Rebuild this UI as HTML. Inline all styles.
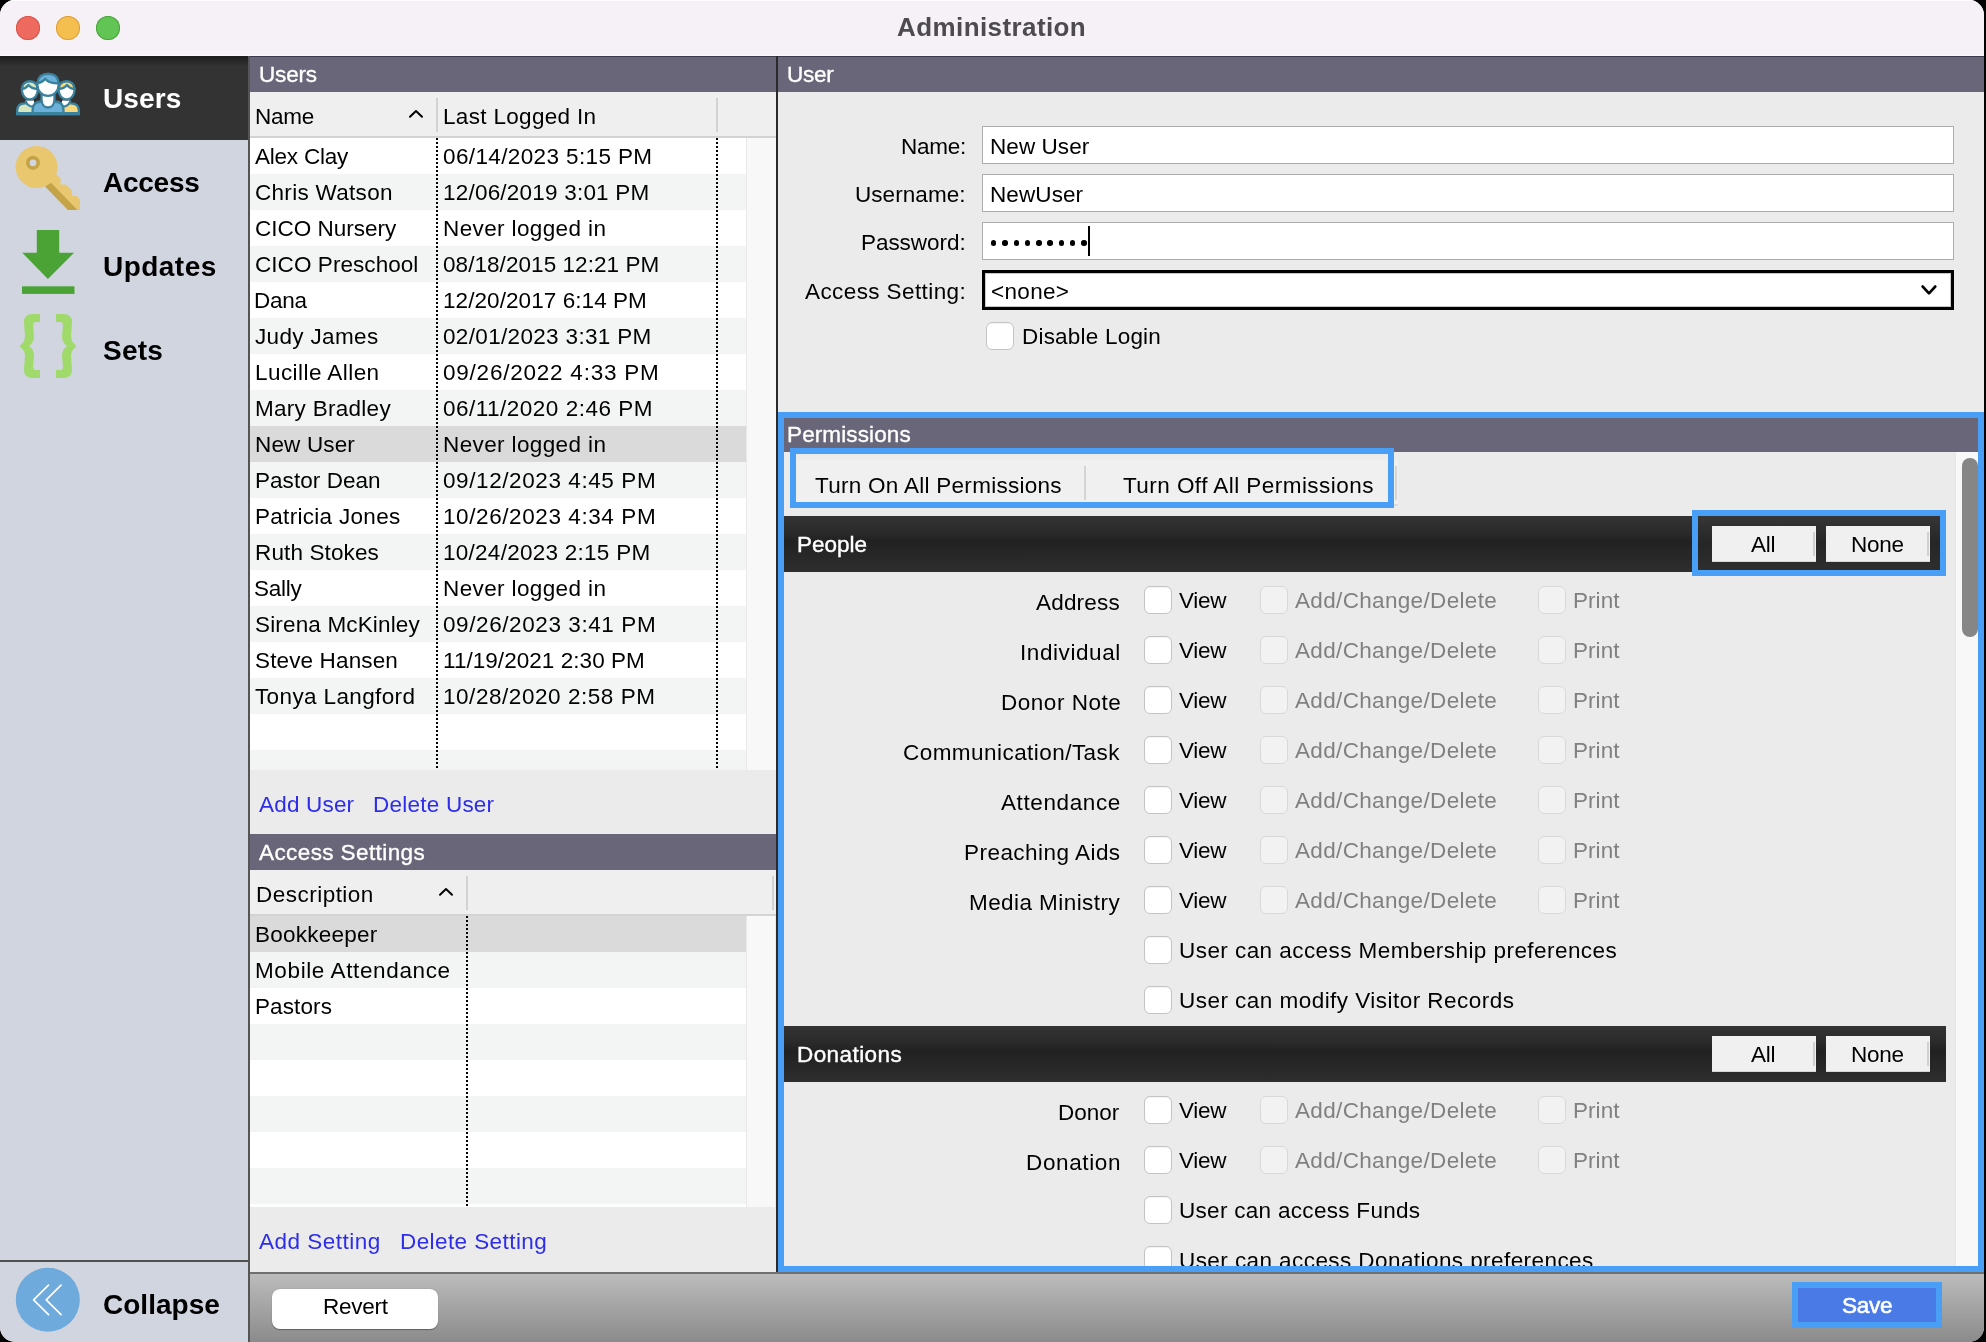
<!DOCTYPE html>
<html><head><meta charset="utf-8"><title>Administration</title>
<style>
html,body{margin:0;padding:0;}
body{width:1986px;height:1342px;background:#000;position:relative;overflow:hidden;font-family:"Liberation Sans",sans-serif;}
#win{position:absolute;left:0;top:0;width:1984px;height:1342px;border-radius:15px;overflow:hidden;background:#ebebeb;}
#win div{position:absolute;}
.t{white-space:nowrap;will-change:transform;}
</style></head><body><div id="win">
<div style="left:0px;top:0px;width:1984px;height:56px;background:#f6f1f7;border-top:1px solid #fdfbfd;box-sizing:border-box;"></div>
<div style="left:0px;top:55px;width:1984px;height:1px;background:#fbf9fb;"></div>
<div style="left:16px;top:16px;width:24px;height:24px;background:#ee6a5f;border-radius:50%;box-shadow:inset 0 0 0 1px #d9534a;"></div>
<div style="left:56px;top:16px;width:24px;height:24px;background:#f5bf4f;border-radius:50%;box-shadow:inset 0 0 0 1px #dca03a;"></div>
<div style="left:96px;top:16px;width:24px;height:24px;background:#61c454;border-radius:50%;box-shadow:inset 0 0 0 1px #4aa63c;"></div>
<div class="t" style="left:897.20px;top:14.09px;font-size:26px;line-height:26px;font-weight:700;color:#4d4b50;letter-spacing:0.408px;">Administration</div>
<div style="left:0px;top:56px;width:248px;height:1286px;background:#d0d5df;"></div>
<div style="left:0px;top:56px;width:248px;height:84px;background:linear-gradient(#1c1c1c 0px,#333 10px,#333 100%);"></div>
<div style="left:248px;top:56px;width:2px;height:1286px;background:#555;"></div>
<svg style="position:absolute;left:14px;top:70px" width="70" height="50" viewBox="14 70 70 50">
<g stroke="#3a819e" stroke-width="2.3" stroke-linejoin="round">
<path d="M17.2 114 V110.5 Q17.2 103.3 25 103.3 H34 V114 Z" fill="#d5e7c1"/>
<path d="M25.5 100.5 Q27.5 107 34 106.5 V100.5 Z" fill="#fff" stroke="none"/><path d="M25.5 100.5 Q27.5 107 34 106.5" fill="none"/>
<path d="M78.8 114 V110.5 Q78.8 103.3 71 103.3 H62 V114 Z" fill="#f8da7c"/>
<path d="M70.5 100.5 Q68.5 107 62 106.5 V100.5 Z" fill="#fff" stroke="none"/><path d="M70.5 100.5 Q68.5 107 62 106.5" fill="none"/>
<ellipse cx="29.8" cy="90.3" rx="7.9" ry="9" fill="#fff"/>
<path d="M21.9 89 Q26 88.5 28.5 85 Q31.5 88.8 37.7 89 Q37.2 81.3 29.8 81.3 Q22.4 81.3 21.9 89 Z" fill="#d5e7c1"/>
<ellipse cx="66.6" cy="90.3" rx="7.9" ry="9" fill="#fff"/>
<path d="M58.7 89 Q64 88.8 67 85 Q69.5 88.5 74.5 89 Q74 81.3 66.6 81.3 Q59.2 81.3 58.7 89 Z" fill="#f8da7c"/>
<path d="M32.6 114 V110 Q32.6 101.5 42 101.5 H54 Q63.5 101.5 63.5 110 V114 Z" fill="#6ab0d8"/>
<path d="M41.5 94 V99.5 Q42 107.5 48 107.5 Q54 107.5 54.5 99.5 V94 Z" fill="#fff" stroke="none"/><path d="M41.5 94 V99.5 Q42 107.5 48 107.5 Q54 107.5 54.5 99.5 V94" fill="none"/>
<ellipse cx="48" cy="84.9" rx="10.6" ry="11" fill="#fff"/>
<path d="M37.5 83 Q42.5 82.5 45.3 78.8 Q48.5 83.3 58.5 83.3 Q58.1 73.9 48 73.9 Q38.4 73.9 37.5 83 Z" fill="#6ab0d8"/>
</g>
<rect x="16" y="112" width="64" height="3.2" fill="#3a819e"/>
</svg>
<svg style="position:absolute;left:10px;top:140px" width="80" height="80" viewBox="10 140 80 80">
<path d="M45 186 L68 210 L80 210 L80 199.5 L76.5 196 L72 196 L72 190.5 L66 184.5 L60.5 184.5 L60.5 178.5 L56 174 z" fill="#e8c76e"/>
<path d="M45 186.5 L68 210 L77.5 210 L51 182.8 z" fill="#c5a448"/>
<circle cx="36.5" cy="167" r="21" fill="#e8c76e"/>
<circle cx="33" cy="162.8" r="5.2" fill="#d0d5df" stroke="#c5a448" stroke-width="3.6"/>
</svg>
<svg style="position:absolute;left:10px;top:224px" width="80" height="80" viewBox="10 224 80 80">
<path d="M36.8 230 H59.2 V252.7 H74.1 L47.9 279 L22.2 252.7 H36.8 z" fill="#4ba235"/>
<rect x="22" y="286.3" width="52.5" height="7.6" fill="#4ba235"/>
</svg>
<svg style="position:absolute;left:10px;top:308px" width="80" height="80" viewBox="10 308 80 80">
<path d="M40 314 H33 Q24 314 24 322 Q24.5 330 25 336 Q25 342 20 345.5 V347 Q25 350 25 356 Q24.5 362 24 370 Q24 378 33 378 H40 V370 H36 Q33 370 33 367 Q33.5 361 34 356 Q34 349.5 29 346 Q34 342.5 34 336 Q33.5 331 33 325 Q33 322 36 322 H40 z" fill="#a0da6b"/>
<path d="M56 314 H63 Q72 314 72 322 Q71.5 330 71 336 Q71 342 76 345.5 V347 Q71 350 71 356 Q71.5 362 72 370 Q72 378 63 378 H56 V370 H60 Q63 370 63 367 Q62.5 361 62 356 Q62 349.5 67 346 Q62 342.5 62 336 Q62.5 331 63 325 Q63 322 60 322 H56 z" fill="#a0da6b"/>
</svg>
<div class="t" style="left:103.20px;top:85.20px;font-size:28px;line-height:28px;font-weight:700;color:#fff;letter-spacing:0.125px;">Users</div>
<div class="t" style="left:103.12px;top:169.20px;font-size:28px;line-height:28px;font-weight:700;color:#000;letter-spacing:-0.250px;">Access</div>
<div class="t" style="left:103.20px;top:253.20px;font-size:28px;line-height:28px;font-weight:700;color:#000;letter-spacing:0.467px;">Updates</div>
<div class="t" style="left:103.20px;top:337.20px;font-size:28px;line-height:28px;font-weight:700;color:#000;letter-spacing:0.200px;">Sets</div>
<div style="left:0px;top:1260px;width:248px;height:2px;background:#505050;"></div>
<svg style="position:absolute;left:14px;top:1266px" width="68" height="68" viewBox="14 1266 68 68">
<circle cx="47.8" cy="1299.7" r="32" fill="#6eaadc"/>
<path d="M48.5 1285.2 L33.6 1299.8 L48.5 1314.6 M61.1 1285.2 L46.2 1299.8 L61.1 1314.6" fill="none" stroke="#fff" stroke-width="1.7" stroke-linecap="round" stroke-linejoin="round"/>
</svg>
<div class="t" style="left:103.20px;top:1291.20px;font-size:28px;line-height:28px;font-weight:700;color:#000;letter-spacing:0.014px;">Collapse</div>
<div style="left:250px;top:56px;width:526px;height:1216px;background:#ebebeb;"></div>
<div style="left:250px;top:56px;width:526px;height:36px;background:#686678;"></div>
<div class="t" style="left:259.30px;top:63.85px;font-size:22.5px;line-height:22.5px;font-weight:400;color:#fff;letter-spacing:-0.175px;-webkit-text-stroke:0.35px #fff;">Users</div>
<div style="left:250px;top:56px;width:526px;height:1px;background:#3c3b4c;"></div>
<div style="left:250px;top:92px;width:526px;height:44px;background:#efefef;"></div>
<div style="left:250px;top:136px;width:526px;height:2px;background:#d3d3d3;"></div>
<div style="left:436px;top:98px;width:2px;height:34px;background:#d2d2d2;"></div>
<div style="left:716px;top:98px;width:2px;height:34px;background:#d2d2d2;"></div>
<div class="t" style="left:254.92px;top:105.65px;font-size:22.5px;line-height:22.5px;font-weight:400;color:#000;letter-spacing:-0.250px;">Name</div>
<div class="t" style="left:442.80px;top:105.65px;font-size:22.5px;line-height:22.5px;font-weight:400;color:#000;letter-spacing:0.323px;">Last Logged In</div>
<svg style="position:absolute;left:408px;top:107px" width="16" height="12" viewBox="0 0 16 12"><path d="M2 9.7 L8 4.1 L14 9.7" fill="none" stroke="#000" stroke-width="2" stroke-linecap="round" stroke-linejoin="round"/></svg>
<div style="left:250px;top:138px;width:496px;height:36px;background:#ffffff;"></div>
<div style="left:250px;top:174px;width:496px;height:36px;background:#f3f5f4;"></div>
<div style="left:250px;top:210px;width:496px;height:36px;background:#ffffff;"></div>
<div style="left:250px;top:246px;width:496px;height:36px;background:#f3f5f4;"></div>
<div style="left:250px;top:282px;width:496px;height:36px;background:#ffffff;"></div>
<div style="left:250px;top:318px;width:496px;height:36px;background:#f3f5f4;"></div>
<div style="left:250px;top:354px;width:496px;height:36px;background:#ffffff;"></div>
<div style="left:250px;top:390px;width:496px;height:36px;background:#f3f5f4;"></div>
<div style="left:250px;top:426px;width:496px;height:36px;background:#dadada;"></div>
<div style="left:250px;top:462px;width:496px;height:36px;background:#f3f5f4;"></div>
<div style="left:250px;top:498px;width:496px;height:36px;background:#ffffff;"></div>
<div style="left:250px;top:534px;width:496px;height:36px;background:#f3f5f4;"></div>
<div style="left:250px;top:570px;width:496px;height:36px;background:#ffffff;"></div>
<div style="left:250px;top:606px;width:496px;height:36px;background:#f3f5f4;"></div>
<div style="left:250px;top:642px;width:496px;height:36px;background:#ffffff;"></div>
<div style="left:250px;top:678px;width:496px;height:36px;background:#f3f5f4;"></div>
<div style="left:250px;top:714px;width:496px;height:36px;background:#ffffff;"></div>
<div style="left:250px;top:750px;width:496px;height:20px;background:#f3f5f4;"></div>
<div class="t" style="left:254.70px;top:145.55px;font-size:22.5px;line-height:22.5px;font-weight:400;color:#000;letter-spacing:-0.225px;">Alex Clay</div>
<div class="t" style="left:442.90px;top:145.55px;font-size:22.5px;line-height:22.5px;font-weight:400;color:#000;letter-spacing:0.376px;">06/14/2023 5:15 PM</div>
<div class="t" style="left:254.70px;top:181.55px;font-size:22.5px;line-height:22.5px;font-weight:400;color:#000;letter-spacing:0.300px;">Chris Watson</div>
<div class="t" style="left:442.90px;top:181.55px;font-size:22.5px;line-height:22.5px;font-weight:400;color:#000;letter-spacing:0.212px;">12/06/2019 3:01 PM</div>
<div class="t" style="left:254.70px;top:217.55px;font-size:22.5px;line-height:22.5px;font-weight:400;color:#000;letter-spacing:0.000px;">CICO Nursery</div>
<div class="t" style="left:442.90px;top:217.55px;font-size:22.5px;line-height:22.5px;font-weight:400;color:#000;letter-spacing:0.379px;">Never logged in</div>
<div class="t" style="left:254.70px;top:253.55px;font-size:22.5px;line-height:22.5px;font-weight:400;color:#000;letter-spacing:0.062px;">CICO Preschool</div>
<div class="t" style="left:442.90px;top:253.55px;font-size:22.5px;line-height:22.5px;font-weight:400;color:#000;letter-spacing:0.061px;">08/18/2015 12:21 PM</div>
<div class="t" style="left:253.88px;top:289.55px;font-size:22.5px;line-height:22.5px;font-weight:400;color:#000;letter-spacing:-0.250px;">Dana</div>
<div class="t" style="left:442.90px;top:289.55px;font-size:22.5px;line-height:22.5px;font-weight:400;color:#000;letter-spacing:0.071px;">12/20/2017 6:14 PM</div>
<div class="t" style="left:254.70px;top:325.55px;font-size:22.5px;line-height:22.5px;font-weight:400;color:#000;letter-spacing:0.344px;">Judy James</div>
<div class="t" style="left:442.90px;top:325.55px;font-size:22.5px;line-height:22.5px;font-weight:400;color:#000;letter-spacing:0.335px;">02/01/2023 3:31 PM</div>
<div class="t" style="left:254.70px;top:361.55px;font-size:22.5px;line-height:22.5px;font-weight:400;color:#000;letter-spacing:0.442px;">Lucille Allen</div>
<div class="t" style="left:442.90px;top:361.55px;font-size:22.5px;line-height:22.5px;font-weight:400;color:#000;letter-spacing:0.771px;">09/26/2022 4:33 PM</div>
<div class="t" style="left:254.70px;top:397.55px;font-size:22.5px;line-height:22.5px;font-weight:400;color:#000;letter-spacing:0.282px;">Mary Bradley</div>
<div class="t" style="left:442.90px;top:397.55px;font-size:22.5px;line-height:22.5px;font-weight:400;color:#000;letter-spacing:0.494px;">06/11/2020 2:46 PM</div>
<div class="t" style="left:254.70px;top:433.55px;font-size:22.5px;line-height:22.5px;font-weight:400;color:#000;letter-spacing:0.157px;">New User</div>
<div class="t" style="left:442.90px;top:433.55px;font-size:22.5px;line-height:22.5px;font-weight:400;color:#000;letter-spacing:0.379px;">Never logged in</div>
<div class="t" style="left:254.70px;top:469.55px;font-size:22.5px;line-height:22.5px;font-weight:400;color:#000;letter-spacing:0.050px;">Pastor Dean</div>
<div class="t" style="left:442.90px;top:469.55px;font-size:22.5px;line-height:22.5px;font-weight:400;color:#000;letter-spacing:0.588px;">09/12/2023 4:45 PM</div>
<div class="t" style="left:254.70px;top:505.55px;font-size:22.5px;line-height:22.5px;font-weight:400;color:#000;letter-spacing:0.300px;">Patricia Jones</div>
<div class="t" style="left:442.90px;top:505.55px;font-size:22.5px;line-height:22.5px;font-weight:400;color:#000;letter-spacing:0.588px;">10/26/2023 4:34 PM</div>
<div class="t" style="left:254.70px;top:541.55px;font-size:22.5px;line-height:22.5px;font-weight:400;color:#000;letter-spacing:0.130px;">Ruth Stokes</div>
<div class="t" style="left:442.90px;top:541.55px;font-size:22.5px;line-height:22.5px;font-weight:400;color:#000;letter-spacing:0.265px;">10/24/2023 2:15 PM</div>
<div class="t" style="left:254.10px;top:577.55px;font-size:22.5px;line-height:22.5px;font-weight:400;color:#000;letter-spacing:-0.250px;">Sally</div>
<div class="t" style="left:442.90px;top:577.55px;font-size:22.5px;line-height:22.5px;font-weight:400;color:#000;letter-spacing:0.379px;">Never logged in</div>
<div class="t" style="left:254.70px;top:613.55px;font-size:22.5px;line-height:22.5px;font-weight:400;color:#000;letter-spacing:0.157px;">Sirena McKinley</div>
<div class="t" style="left:442.90px;top:613.55px;font-size:22.5px;line-height:22.5px;font-weight:400;color:#000;letter-spacing:0.588px;">09/26/2023 3:41 PM</div>
<div class="t" style="left:254.70px;top:649.55px;font-size:22.5px;line-height:22.5px;font-weight:400;color:#000;letter-spacing:0.136px;">Steve Hansen</div>
<div class="t" style="left:442.90px;top:649.55px;font-size:22.5px;line-height:22.5px;font-weight:400;color:#000;letter-spacing:0.047px;">11/19/2021 2:30 PM</div>
<div class="t" style="left:254.70px;top:685.55px;font-size:22.5px;line-height:22.5px;font-weight:400;color:#000;letter-spacing:0.369px;">Tonya Langford</div>
<div class="t" style="left:442.90px;top:685.55px;font-size:22.5px;line-height:22.5px;font-weight:400;color:#000;letter-spacing:0.547px;">10/28/2020 2:58 PM</div>
<div style="left:436px;top:138px;width:2px;height:632px;background:repeating-linear-gradient(#000 0 2px,transparent 2px 4px);"></div>
<div style="left:716px;top:138px;width:2px;height:632px;background:repeating-linear-gradient(#000 0 2px,transparent 2px 4px);"></div>
<div style="left:746px;top:138px;width:30px;height:632px;background:#f8f8f8;border-left:1px solid #e8e8e8;box-sizing:border-box;"></div>
<div class="t" style="left:258.80px;top:793.85px;font-size:22.5px;line-height:22.5px;font-weight:400;color:#2d2dea;letter-spacing:0.186px;">Add User</div>
<div class="t" style="left:372.90px;top:793.85px;font-size:22.5px;line-height:22.5px;font-weight:400;color:#2d2dea;letter-spacing:0.230px;">Delete User</div>
<div style="left:250px;top:834px;width:526px;height:36px;background:#686678;"></div>
<div class="t" style="left:259.30px;top:841.85px;font-size:22.5px;line-height:22.5px;font-weight:400;color:#fff;letter-spacing:0.407px;-webkit-text-stroke:0.35px #fff;">Access Settings</div>
<div style="left:250px;top:870px;width:526px;height:44px;background:#efefef;"></div>
<div style="left:250px;top:914px;width:526px;height:2px;background:#d3d3d3;"></div>
<div style="left:466px;top:876px;width:2px;height:34px;background:#d2d2d2;"></div>
<div style="left:772px;top:876px;width:2px;height:34px;background:#d2d2d2;"></div>
<div class="t" style="left:255.70px;top:883.65px;font-size:22.5px;line-height:22.5px;font-weight:400;color:#000;letter-spacing:0.480px;">Description</div>
<svg style="position:absolute;left:438px;top:885px" width="16" height="12" viewBox="0 0 16 12"><path d="M2 9.7 L8 4.1 L14 9.7" fill="none" stroke="#000" stroke-width="2" stroke-linecap="round" stroke-linejoin="round"/></svg>
<div style="left:250px;top:916px;width:496px;height:36px;background:#dadada;"></div>
<div style="left:250px;top:952px;width:496px;height:36px;background:#f3f5f4;"></div>
<div style="left:250px;top:988px;width:496px;height:36px;background:#ffffff;"></div>
<div style="left:250px;top:1024px;width:496px;height:36px;background:#f3f5f4;"></div>
<div style="left:250px;top:1060px;width:496px;height:36px;background:#ffffff;"></div>
<div style="left:250px;top:1096px;width:496px;height:36px;background:#f3f5f4;"></div>
<div style="left:250px;top:1132px;width:496px;height:36px;background:#ffffff;"></div>
<div style="left:250px;top:1168px;width:496px;height:36px;background:#f3f5f4;"></div>
<div style="left:250px;top:1204px;width:496px;height:3px;background:#fff;"></div>
<div class="t" style="left:254.70px;top:923.55px;font-size:22.5px;line-height:22.5px;font-weight:400;color:#000;letter-spacing:0.244px;">Bookkeeper</div>
<div class="t" style="left:254.70px;top:959.55px;font-size:22.5px;line-height:22.5px;font-weight:400;color:#000;letter-spacing:0.619px;">Mobile Attendance</div>
<div class="t" style="left:254.70px;top:995.55px;font-size:22.5px;line-height:22.5px;font-weight:400;color:#000;letter-spacing:0.117px;">Pastors</div>
<div style="left:466px;top:916px;width:2px;height:290px;background:repeating-linear-gradient(#000 0 2px,transparent 2px 4px);"></div>
<div style="left:746px;top:916px;width:29px;height:291px;background:#f8f8f8;border-left:1px solid #e8e8e8;box-sizing:border-box;"></div>
<div class="t" style="left:259.40px;top:1231.15px;font-size:22.5px;line-height:22.5px;font-weight:400;color:#2d2dea;letter-spacing:0.490px;">Add Setting</div>
<div class="t" style="left:399.60px;top:1231.35px;font-size:22.5px;line-height:22.5px;font-weight:400;color:#2d2dea;letter-spacing:0.415px;">Delete Setting</div>
<div style="left:776px;top:56px;width:2px;height:1216px;background:#2a2a2a;"></div>
<div style="left:778px;top:56px;width:1206px;height:36px;background:#686678;"></div>
<div style="left:778px;top:56px;width:1206px;height:1px;background:#3c3b4c;"></div>
<div class="t" style="left:787.10px;top:64.15px;font-size:22.5px;line-height:22.5px;font-weight:400;color:#fff;letter-spacing:-0.233px;-webkit-text-stroke:0.35px #fff;">User</div>
<div class="t" style="left:900.95px;top:136.25px;font-size:22.5px;line-height:22.5px;font-weight:400;color:#000;letter-spacing:-0.250px;">Name:</div>
<div class="t" style="left:855.20px;top:184.45px;font-size:22.5px;line-height:22.5px;font-weight:400;color:#000;letter-spacing:0.062px;">Username:</div>
<div class="t" style="left:861.10px;top:232.25px;font-size:22.5px;line-height:22.5px;font-weight:400;color:#000;letter-spacing:-0.050px;">Password:</div>
<div class="t" style="left:805.00px;top:281.15px;font-size:22.5px;line-height:22.5px;font-weight:400;color:#000;letter-spacing:0.407px;">Access Setting:</div>
<div style="left:982px;top:126px;width:972px;height:38px;background:#fff;border:1px solid #acacac;box-sizing:border-box;"></div>
<div style="left:982px;top:174px;width:972px;height:38px;background:#fff;border:1px solid #acacac;box-sizing:border-box;"></div>
<div style="left:982px;top:222px;width:972px;height:38px;background:#fff;border:1px solid #acacac;box-sizing:border-box;"></div>
<div class="t" style="left:989.50px;top:136.25px;font-size:22.5px;line-height:22.5px;font-weight:400;color:#000;letter-spacing:0.071px;">New User</div>
<div class="t" style="left:989.50px;top:184.45px;font-size:22.5px;line-height:22.5px;font-weight:400;color:#000;letter-spacing:0.100px;">NewUser</div>
<div style="left:991.0px;top:240.3px;width:5.4px;height:5.4px;background:#000;border-radius:50%;"></div>
<div style="left:1002.28px;top:240.3px;width:5.4px;height:5.4px;background:#000;border-radius:50%;"></div>
<div style="left:1013.56px;top:240.3px;width:5.4px;height:5.4px;background:#000;border-radius:50%;"></div>
<div style="left:1024.84px;top:240.3px;width:5.4px;height:5.4px;background:#000;border-radius:50%;"></div>
<div style="left:1036.12px;top:240.3px;width:5.4px;height:5.4px;background:#000;border-radius:50%;"></div>
<div style="left:1047.4px;top:240.3px;width:5.4px;height:5.4px;background:#000;border-radius:50%;"></div>
<div style="left:1058.68px;top:240.3px;width:5.4px;height:5.4px;background:#000;border-radius:50%;"></div>
<div style="left:1069.96px;top:240.3px;width:5.4px;height:5.4px;background:#000;border-radius:50%;"></div>
<div style="left:1081.24px;top:240.3px;width:5.4px;height:5.4px;background:#000;border-radius:50%;"></div>
<div style="left:1088px;top:226px;width:2px;height:30px;background:#000;"></div>
<div style="left:982px;top:270px;width:972px;height:40px;background:#fff;border:3px solid #000;box-sizing:border-box;"></div>
<div style="left:985px;top:273px;width:966px;height:34px;border:1px solid #c8c8c8;box-sizing:border-box;"></div>
<div class="t" style="left:991.20px;top:281.15px;font-size:22.5px;line-height:22.5px;font-weight:400;color:#000;letter-spacing:0.320px;">&lt;none&gt;</div>
<svg style="position:absolute;left:1920px;top:283px" width="18" height="14" viewBox="0 0 18 14"><path d="M2.6 3.5 L9 10.3 L15.3 3.5" fill="none" stroke="#000" stroke-width="2.6" stroke-linecap="round" stroke-linejoin="round"/></svg>
<div style="left:986px;top:322px;width:28px;height:28px;background:#fff;border:1px solid #c4c4c4;border-radius:6px;box-sizing:border-box;box-shadow:inset 0 1px 1px rgba(0,0,0,0.05);"></div>
<div class="t" style="left:1021.50px;top:326.45px;font-size:22.5px;line-height:22.5px;font-weight:400;color:#000;letter-spacing:0.208px;">Disable Login</div>
<div style="left:778px;top:412px;width:1206px;height:860px;background:#489ff5;"></div>
<div style="left:784px;top:418px;width:1194px;height:848px;background:#ebebeb;"></div>
<div style="left:784px;top:418px;width:1194px;height:34px;background:#686678;"></div>
<div class="t" style="left:787.20px;top:423.85px;font-size:22.5px;line-height:22.5px;font-weight:400;color:#fff;letter-spacing:0.120px;-webkit-text-stroke:0.35px #fff;">Permissions</div>
<div style="left:1955px;top:452px;width:23px;height:814px;background:#f8f8f8;border-left:1px solid #e6e6e6;box-sizing:border-box;"></div>
<div style="left:1962px;top:458px;width:16px;height:179px;background:#868686;border-radius:8px;"></div>
<div style="left:790px;top:448px;width:604px;height:60px;background:#489ff5;"></div>
<div style="left:796px;top:454px;width:592px;height:48px;background:linear-gradient(#ebebeb 0,#ebebeb 6px,#f0f0f0 6px);"></div>
<div style="left:1084px;top:466px;width:2px;height:34px;background:#d4d4d4;"></div>
<div style="left:1394px;top:460px;width:4px;height:44px;background:#f0f0f0;"></div>
<div style="left:1395px;top:466px;width:2px;height:34px;background:#d4d4d4;"></div>
<div style="left:1394px;top:504px;width:4px;height:2px;background:#dcdcdc;"></div>
<div class="t" style="left:814.90px;top:474.55px;font-size:22.5px;line-height:22.5px;font-weight:400;color:#000;letter-spacing:0.277px;">Turn On All Permissions</div>
<div class="t" style="left:1122.70px;top:474.55px;font-size:22.5px;line-height:22.5px;font-weight:400;color:#000;letter-spacing:0.448px;">Turn Off All Permissions</div>
<div style="left:784px;top:516px;width:1162px;height:56px;background:linear-gradient(#333 0%,#2a2a2a 30%,#212121 45%,#252525 60%,#2e2e2e 100%);"></div>
<div class="t" style="left:796.60px;top:533.85px;font-size:22.5px;line-height:22.5px;font-weight:400;color:#fff;letter-spacing:-0.020px;-webkit-text-stroke:0.4px #fff;">People</div>
<div style="left:1692px;top:510px;width:254px;height:66px;background:#489ff5;"></div>
<div style="left:1698px;top:516px;width:242px;height:54px;background:linear-gradient(#363636,#262626 50%,#2e2e2e);"></div>
<div style="left:1712px;top:526px;width:104px;height:36px;background:#f0f0f0;border-bottom:1px solid #d6d6d6;box-sizing:border-box;"></div>
<div style="left:1813px;top:532px;width:2px;height:24px;background:#d0d0d0;"></div>
<div class="t" style="left:1750.85px;top:533.95px;font-size:22.5px;line-height:22.5px;font-weight:400;color:#000;letter-spacing:-0.250px;">All</div>
<div style="left:1826px;top:526px;width:104px;height:36px;background:#f0f0f0;border-bottom:1px solid #d6d6d6;box-sizing:border-box;"></div>
<div style="left:1927px;top:532px;width:2px;height:24px;background:#d0d0d0;"></div>
<div class="t" style="left:1851.18px;top:533.95px;font-size:22.5px;line-height:22.5px;font-weight:400;color:#000;letter-spacing:-0.250px;">None</div>
<div class="t" style="left:1036.30px;top:591.85px;font-size:22.5px;line-height:22.5px;font-weight:400;color:#000;letter-spacing:0.183px;">Address</div>
<div style="left:1144px;top:586px;width:28px;height:28px;background:#fff;border:1px solid #c4c4c4;border-radius:6px;box-sizing:border-box;box-shadow:inset 0 1px 1px rgba(0,0,0,0.05);"></div>
<div class="t" style="left:1178.88px;top:589.65px;font-size:22.5px;line-height:22.5px;font-weight:400;color:#000;letter-spacing:-0.250px;">View</div>
<div style="left:1260px;top:586px;width:28px;height:28px;background:#f2f2f2;border:1px solid #d9d9d9;border-radius:6px;box-sizing:border-box;"></div>
<div class="t" style="left:1295.20px;top:589.65px;font-size:22.5px;line-height:22.5px;font-weight:400;color:#808080;letter-spacing:0.337px;">Add/Change/Delete</div>
<div style="left:1538px;top:586px;width:28px;height:28px;background:#f2f2f2;border:1px solid #d9d9d9;border-radius:6px;box-sizing:border-box;"></div>
<div class="t" style="left:1573.20px;top:589.65px;font-size:22.5px;line-height:22.5px;font-weight:400;color:#808080;letter-spacing:0.050px;">Print</div>
<div class="t" style="left:1020.20px;top:641.85px;font-size:22.5px;line-height:22.5px;font-weight:400;color:#000;letter-spacing:0.578px;">Individual</div>
<div style="left:1144px;top:636px;width:28px;height:28px;background:#fff;border:1px solid #c4c4c4;border-radius:6px;box-sizing:border-box;box-shadow:inset 0 1px 1px rgba(0,0,0,0.05);"></div>
<div class="t" style="left:1178.88px;top:639.65px;font-size:22.5px;line-height:22.5px;font-weight:400;color:#000;letter-spacing:-0.250px;">View</div>
<div style="left:1260px;top:636px;width:28px;height:28px;background:#f2f2f2;border:1px solid #d9d9d9;border-radius:6px;box-sizing:border-box;"></div>
<div class="t" style="left:1295.20px;top:639.65px;font-size:22.5px;line-height:22.5px;font-weight:400;color:#808080;letter-spacing:0.337px;">Add/Change/Delete</div>
<div style="left:1538px;top:636px;width:28px;height:28px;background:#f2f2f2;border:1px solid #d9d9d9;border-radius:6px;box-sizing:border-box;"></div>
<div class="t" style="left:1573.20px;top:639.65px;font-size:22.5px;line-height:22.5px;font-weight:400;color:#808080;letter-spacing:0.050px;">Print</div>
<div class="t" style="left:1000.60px;top:691.85px;font-size:22.5px;line-height:22.5px;font-weight:400;color:#000;letter-spacing:0.533px;">Donor Note</div>
<div style="left:1144px;top:686px;width:28px;height:28px;background:#fff;border:1px solid #c4c4c4;border-radius:6px;box-sizing:border-box;box-shadow:inset 0 1px 1px rgba(0,0,0,0.05);"></div>
<div class="t" style="left:1178.88px;top:689.65px;font-size:22.5px;line-height:22.5px;font-weight:400;color:#000;letter-spacing:-0.250px;">View</div>
<div style="left:1260px;top:686px;width:28px;height:28px;background:#f2f2f2;border:1px solid #d9d9d9;border-radius:6px;box-sizing:border-box;"></div>
<div class="t" style="left:1295.20px;top:689.65px;font-size:22.5px;line-height:22.5px;font-weight:400;color:#808080;letter-spacing:0.337px;">Add/Change/Delete</div>
<div style="left:1538px;top:686px;width:28px;height:28px;background:#f2f2f2;border:1px solid #d9d9d9;border-radius:6px;box-sizing:border-box;"></div>
<div class="t" style="left:1573.20px;top:689.65px;font-size:22.5px;line-height:22.5px;font-weight:400;color:#808080;letter-spacing:0.050px;">Print</div>
<div class="t" style="left:902.70px;top:741.85px;font-size:22.5px;line-height:22.5px;font-weight:400;color:#000;letter-spacing:0.453px;">Communication/Task</div>
<div style="left:1144px;top:736px;width:28px;height:28px;background:#fff;border:1px solid #c4c4c4;border-radius:6px;box-sizing:border-box;box-shadow:inset 0 1px 1px rgba(0,0,0,0.05);"></div>
<div class="t" style="left:1178.88px;top:739.65px;font-size:22.5px;line-height:22.5px;font-weight:400;color:#000;letter-spacing:-0.250px;">View</div>
<div style="left:1260px;top:736px;width:28px;height:28px;background:#f2f2f2;border:1px solid #d9d9d9;border-radius:6px;box-sizing:border-box;"></div>
<div class="t" style="left:1295.20px;top:739.65px;font-size:22.5px;line-height:22.5px;font-weight:400;color:#808080;letter-spacing:0.337px;">Add/Change/Delete</div>
<div style="left:1538px;top:736px;width:28px;height:28px;background:#f2f2f2;border:1px solid #d9d9d9;border-radius:6px;box-sizing:border-box;"></div>
<div class="t" style="left:1573.20px;top:739.65px;font-size:22.5px;line-height:22.5px;font-weight:400;color:#808080;letter-spacing:0.050px;">Print</div>
<div class="t" style="left:1001.00px;top:791.85px;font-size:22.5px;line-height:22.5px;font-weight:400;color:#000;letter-spacing:0.600px;">Attendance</div>
<div style="left:1144px;top:786px;width:28px;height:28px;background:#fff;border:1px solid #c4c4c4;border-radius:6px;box-sizing:border-box;box-shadow:inset 0 1px 1px rgba(0,0,0,0.05);"></div>
<div class="t" style="left:1178.88px;top:789.65px;font-size:22.5px;line-height:22.5px;font-weight:400;color:#000;letter-spacing:-0.250px;">View</div>
<div style="left:1260px;top:786px;width:28px;height:28px;background:#f2f2f2;border:1px solid #d9d9d9;border-radius:6px;box-sizing:border-box;"></div>
<div class="t" style="left:1295.20px;top:789.65px;font-size:22.5px;line-height:22.5px;font-weight:400;color:#808080;letter-spacing:0.337px;">Add/Change/Delete</div>
<div style="left:1538px;top:786px;width:28px;height:28px;background:#f2f2f2;border:1px solid #d9d9d9;border-radius:6px;box-sizing:border-box;"></div>
<div class="t" style="left:1573.20px;top:789.65px;font-size:22.5px;line-height:22.5px;font-weight:400;color:#808080;letter-spacing:0.050px;">Print</div>
<div class="t" style="left:964.40px;top:841.85px;font-size:22.5px;line-height:22.5px;font-weight:400;color:#000;letter-spacing:0.462px;">Preaching Aids</div>
<div style="left:1144px;top:836px;width:28px;height:28px;background:#fff;border:1px solid #c4c4c4;border-radius:6px;box-sizing:border-box;box-shadow:inset 0 1px 1px rgba(0,0,0,0.05);"></div>
<div class="t" style="left:1178.88px;top:839.65px;font-size:22.5px;line-height:22.5px;font-weight:400;color:#000;letter-spacing:-0.250px;">View</div>
<div style="left:1260px;top:836px;width:28px;height:28px;background:#f2f2f2;border:1px solid #d9d9d9;border-radius:6px;box-sizing:border-box;"></div>
<div class="t" style="left:1295.20px;top:839.65px;font-size:22.5px;line-height:22.5px;font-weight:400;color:#808080;letter-spacing:0.337px;">Add/Change/Delete</div>
<div style="left:1538px;top:836px;width:28px;height:28px;background:#f2f2f2;border:1px solid #d9d9d9;border-radius:6px;box-sizing:border-box;"></div>
<div class="t" style="left:1573.20px;top:839.65px;font-size:22.5px;line-height:22.5px;font-weight:400;color:#808080;letter-spacing:0.050px;">Print</div>
<div class="t" style="left:968.80px;top:891.85px;font-size:22.5px;line-height:22.5px;font-weight:400;color:#000;letter-spacing:0.431px;">Media Ministry</div>
<div style="left:1144px;top:886px;width:28px;height:28px;background:#fff;border:1px solid #c4c4c4;border-radius:6px;box-sizing:border-box;box-shadow:inset 0 1px 1px rgba(0,0,0,0.05);"></div>
<div class="t" style="left:1178.88px;top:889.65px;font-size:22.5px;line-height:22.5px;font-weight:400;color:#000;letter-spacing:-0.250px;">View</div>
<div style="left:1260px;top:886px;width:28px;height:28px;background:#f2f2f2;border:1px solid #d9d9d9;border-radius:6px;box-sizing:border-box;"></div>
<div class="t" style="left:1295.20px;top:889.65px;font-size:22.5px;line-height:22.5px;font-weight:400;color:#808080;letter-spacing:0.337px;">Add/Change/Delete</div>
<div style="left:1538px;top:886px;width:28px;height:28px;background:#f2f2f2;border:1px solid #d9d9d9;border-radius:6px;box-sizing:border-box;"></div>
<div class="t" style="left:1573.20px;top:889.65px;font-size:22.5px;line-height:22.5px;font-weight:400;color:#808080;letter-spacing:0.050px;">Print</div>
<div style="left:1144px;top:936px;width:28px;height:28px;background:#fff;border:1px solid #c4c4c4;border-radius:6px;box-sizing:border-box;box-shadow:inset 0 1px 1px rgba(0,0,0,0.05);"></div>
<div class="t" style="left:1179.30px;top:939.65px;font-size:22.5px;line-height:22.5px;font-weight:400;color:#000;letter-spacing:0.441px;">User can access Membership preferences</div>
<div style="left:1144px;top:986px;width:28px;height:28px;background:#fff;border:1px solid #c4c4c4;border-radius:6px;box-sizing:border-box;box-shadow:inset 0 1px 1px rgba(0,0,0,0.05);"></div>
<div class="t" style="left:1179.30px;top:989.65px;font-size:22.5px;line-height:22.5px;font-weight:400;color:#000;letter-spacing:0.467px;">User can modify Visitor Records</div>
<div style="left:784px;top:1026px;width:1162px;height:56px;background:linear-gradient(#333 0%,#2a2a2a 30%,#212121 45%,#252525 60%,#2e2e2e 100%);"></div>
<div class="t" style="left:796.60px;top:1043.85px;font-size:22.5px;line-height:22.5px;font-weight:400;color:#fff;letter-spacing:0.425px;-webkit-text-stroke:0.4px #fff;">Donations</div>
<div style="left:1712px;top:1036px;width:104px;height:36px;background:#f0f0f0;border-bottom:1px solid #d6d6d6;box-sizing:border-box;"></div>
<div style="left:1813px;top:1042px;width:2px;height:24px;background:#d0d0d0;"></div>
<div class="t" style="left:1750.85px;top:1043.95px;font-size:22.5px;line-height:22.5px;font-weight:400;color:#000;letter-spacing:-0.250px;">All</div>
<div style="left:1826px;top:1036px;width:104px;height:36px;background:#f0f0f0;border-bottom:1px solid #d6d6d6;box-sizing:border-box;"></div>
<div style="left:1927px;top:1042px;width:2px;height:24px;background:#d0d0d0;"></div>
<div class="t" style="left:1851.18px;top:1043.95px;font-size:22.5px;line-height:22.5px;font-weight:400;color:#000;letter-spacing:-0.250px;">None</div>
<div class="t" style="left:1058.40px;top:1101.85px;font-size:22.5px;line-height:22.5px;font-weight:400;color:#000;letter-spacing:0.000px;">Donor</div>
<div style="left:1144px;top:1096px;width:28px;height:28px;background:#fff;border:1px solid #c4c4c4;border-radius:6px;box-sizing:border-box;box-shadow:inset 0 1px 1px rgba(0,0,0,0.05);"></div>
<div class="t" style="left:1178.88px;top:1099.65px;font-size:22.5px;line-height:22.5px;font-weight:400;color:#000;letter-spacing:-0.250px;">View</div>
<div style="left:1260px;top:1096px;width:28px;height:28px;background:#f2f2f2;border:1px solid #d9d9d9;border-radius:6px;box-sizing:border-box;"></div>
<div class="t" style="left:1295.20px;top:1099.65px;font-size:22.5px;line-height:22.5px;font-weight:400;color:#808080;letter-spacing:0.337px;">Add/Change/Delete</div>
<div style="left:1538px;top:1096px;width:28px;height:28px;background:#f2f2f2;border:1px solid #d9d9d9;border-radius:6px;box-sizing:border-box;"></div>
<div class="t" style="left:1573.20px;top:1099.65px;font-size:22.5px;line-height:22.5px;font-weight:400;color:#808080;letter-spacing:0.050px;">Print</div>
<div class="t" style="left:1026.00px;top:1151.85px;font-size:22.5px;line-height:22.5px;font-weight:400;color:#000;letter-spacing:0.629px;">Donation</div>
<div style="left:1144px;top:1146px;width:28px;height:28px;background:#fff;border:1px solid #c4c4c4;border-radius:6px;box-sizing:border-box;box-shadow:inset 0 1px 1px rgba(0,0,0,0.05);"></div>
<div class="t" style="left:1178.88px;top:1149.65px;font-size:22.5px;line-height:22.5px;font-weight:400;color:#000;letter-spacing:-0.250px;">View</div>
<div style="left:1260px;top:1146px;width:28px;height:28px;background:#f2f2f2;border:1px solid #d9d9d9;border-radius:6px;box-sizing:border-box;"></div>
<div class="t" style="left:1295.20px;top:1149.65px;font-size:22.5px;line-height:22.5px;font-weight:400;color:#808080;letter-spacing:0.337px;">Add/Change/Delete</div>
<div style="left:1538px;top:1146px;width:28px;height:28px;background:#f2f2f2;border:1px solid #d9d9d9;border-radius:6px;box-sizing:border-box;"></div>
<div class="t" style="left:1573.20px;top:1149.65px;font-size:22.5px;line-height:22.5px;font-weight:400;color:#808080;letter-spacing:0.050px;">Print</div>
<div style="left:1144px;top:1196px;width:28px;height:28px;background:#fff;border:1px solid #c4c4c4;border-radius:6px;box-sizing:border-box;box-shadow:inset 0 1px 1px rgba(0,0,0,0.05);"></div>
<div class="t" style="left:1179.30px;top:1199.65px;font-size:22.5px;line-height:22.5px;font-weight:400;color:#000;letter-spacing:0.300px;">User can access Funds</div>
<div style="left:1144px;top:1246px;width:28px;height:28px;background:#fff;border:1px solid #c4c4c4;border-radius:6px;box-sizing:border-box;box-shadow:inset 0 1px 1px rgba(0,0,0,0.05);"></div>
<div class="t" style="left:1179.30px;top:1249.65px;font-size:22.5px;line-height:22.5px;font-weight:400;color:#000;letter-spacing:0.425px;">User can access Donations preferences</div>
<div style="left:778px;top:1266px;width:1206px;height:6px;background:#489ff5;"></div>
<div style="left:250px;top:1272px;width:1734px;height:70px;background:linear-gradient(#707070 0,#707070 2px,#bcbcbc 2px,#8b8b8b 100%);"></div>
<div style="left:272px;top:1289px;width:166px;height:40px;background:#fff;border-radius:8px;box-shadow:0 0.5px 1px rgba(0,0,0,0.35);"></div>
<div class="t" style="left:323.48px;top:1295.75px;font-size:22.5px;line-height:22.5px;font-weight:400;color:#000;letter-spacing:-0.250px;">Revert</div>
<div style="left:1792px;top:1282px;width:150px;height:46px;background:#489ff5;"></div>
<div style="left:1798px;top:1288px;width:138px;height:34px;background:#4a7ae6;"></div>
<div class="t" style="left:1842.03px;top:1295.15px;font-size:22.5px;line-height:22.5px;font-weight:400;color:#fff;letter-spacing:-0.250px;-webkit-text-stroke:0.6px #fff;">Save</div></div></body></html>
